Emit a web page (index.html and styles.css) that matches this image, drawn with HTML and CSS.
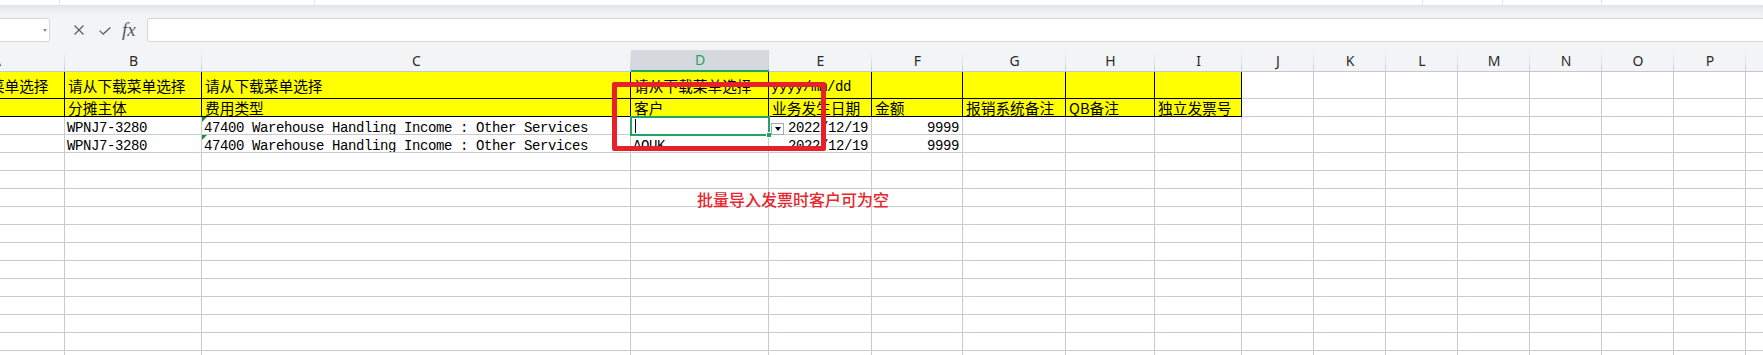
FILE: index.html
```html
<!DOCTYPE html>
<html lang="zh-CN">
<head>
<meta charset="utf-8">
<title>Sheet</title>
<link rel="stylesheet" href="styles.css">
</head>
<body>
<div class="app">
  <div class="toolbar">
    <span class="tb" style="width:60px"></span>
    <span class="tb" style="width:255px"></span>
    <span class="tb" style="width:1108px"></span>
    <span class="tb" style="width:80px"></span>
    <span class="tb" style="width:99px"></span>
  </div>
  <div class="shadow"></div>
  <div class="fbar">
    <div class="namebox"><span class="nb-arrow"></span></div>
    <svg class="ic ic-x" width="10" height="10" viewBox="0 0 10 10"><path d="M0.5 0.5L9.5 9.5M9.5 0.5L0.5 9.5" stroke="#5b5f66" stroke-width="1.3" fill="none"/></svg>
    <svg class="ic ic-ok" width="12" height="8" viewBox="0 0 12 8"><path d="M0.6 3.6L4.2 7.1L11.4 0.6" stroke="#5b5f66" stroke-width="1.3" fill="none"/></svg>
    <span class="fx">fx</span>
    <div class="finput"></div>
  </div>
  <div class="gap"></div>
  <div class="sheet">
    <div class="r h">
      <span>A</span><span>B</span><span>C</span><span class="sel">D</span><span>E</span><span>F</span><span>G</span><span>H</span><span>I</span><span>J</span><span>K</span><span>L</span><span>M</span><span>N</span><span>O</span><span>P</span><span>Q</span>
    </div>
    <div class="r r1">
      <span class="y">请从下载菜单选择</span><span class="y">请从下载菜单选择</span><span class="y">请从下载菜单选择</span><span class="y">请从下载菜单选择</span><span class="y m">yyyy/mm/dd</span><span class="y"></span><span class="y"></span><span class="y"></span><span class="y"></span><span></span><span></span><span></span><span></span><span></span><span></span><span></span><span></span>
    </div>
    <div class="r r2">
      <span class="y"></span><span class="y">分摊主体</span><span class="y">费用类型</span><span class="y">客户</span><span class="y">业务发生日期</span><span class="y">金额</span><span class="y">报销系统备注</span><span class="y">QB备注</span><span class="y">独立发票号</span><span></span><span></span><span></span><span></span><span></span><span></span><span></span><span></span>
    </div>
    <div class="r d">
      <span></span><span class="m">WPNJ7-3280</span><span class="m tri">47400 Warehouse Handling Income : Other Services</span><span></span><span class="m n">2022/12/19</span><span class="m n">9999</span><span></span><span></span><span></span><span></span><span></span><span></span><span></span><span></span><span></span><span></span><span></span>
    </div>
    <div class="r d">
      <span></span><span class="m">WPNJ7-3280</span><span class="m tri">47400 Warehouse Handling Income : Other Services</span><span class="m">AOUK</span><span class="m n">2022/12/19</span><span class="m n">9999</span><span></span><span></span><span></span><span></span><span></span><span></span><span></span><span></span><span></span><span></span><span></span>
    </div>
    <div class="r"><span></span><span></span><span></span><span></span><span></span><span></span><span></span><span></span><span></span><span></span><span></span><span></span><span></span><span></span><span></span><span></span><span></span></div>
    <div class="r"><span></span><span></span><span></span><span></span><span></span><span></span><span></span><span></span><span></span><span></span><span></span><span></span><span></span><span></span><span></span><span></span><span></span></div>
    <div class="r"><span></span><span></span><span></span><span></span><span></span><span></span><span></span><span></span><span></span><span></span><span></span><span></span><span></span><span></span><span></span><span></span><span></span></div>
    <div class="r"><span></span><span></span><span></span><span></span><span></span><span></span><span></span><span></span><span></span><span></span><span></span><span></span><span></span><span></span><span></span><span></span><span></span></div>
    <div class="r"><span></span><span></span><span></span><span></span><span></span><span></span><span></span><span></span><span></span><span></span><span></span><span></span><span></span><span></span><span></span><span></span><span></span></div>
    <div class="r"><span></span><span></span><span></span><span></span><span></span><span></span><span></span><span></span><span></span><span></span><span></span><span></span><span></span><span></span><span></span><span></span><span></span></div>
    <div class="r"><span></span><span></span><span></span><span></span><span></span><span></span><span></span><span></span><span></span><span></span><span></span><span></span><span></span><span></span><span></span><span></span><span></span></div>
    <div class="r"><span></span><span></span><span></span><span></span><span></span><span></span><span></span><span></span><span></span><span></span><span></span><span></span><span></span><span></span><span></span><span></span><span></span></div>
    <div class="r"><span></span><span></span><span></span><span></span><span></span><span></span><span></span><span></span><span></span><span></span><span></span><span></span><span></span><span></span><span></span><span></span><span></span></div>
    <div class="r"><span></span><span></span><span></span><span></span><span></span><span></span><span></span><span></span><span></span><span></span><span></span><span></span><span></span><span></span><span></span><span></span><span></span></div>
    <div class="r"><span></span><span></span><span></span><span></span><span></span><span></span><span></span><span></span><span></span><span></span><span></span><span></span><span></span><span></span><span></span><span></span><span></span></div>
    <div class="r"><span></span><span></span><span></span><span></span><span></span><span></span><span></span><span></span><span></span><span></span><span></span><span></span><span></span><span></span><span></span><span></span><span></span></div>
  </div>

  <div class="selbox"><span class="caret"></span><span class="handle"></span></div>
  <div class="ddbtn"><span class="ddtri"></span></div>
  <div class="redbox"></div>
  <div class="note">批量导入发票时客户可为空</div>
</div>
</body>
</html>
```

FILE: styles.css
```css
html, body {
  margin: 0;
  padding: 0;
  background: #ffffff;
}

.app {
  position: relative;
  width: 1763px;
  height: 355px;
  overflow: hidden;
  background: #f3f4f6;
  font-family: "Noto Sans", "Noto Sans CJK SC", sans-serif;
}

/* top ribbon edge */
.toolbar {
  height: 5px;
  background: #ffffff;
  display: flex;
}
.tb {
  height: 5px;
  border-right: 1px solid #e3e4e7;
  box-sizing: border-box;
  flex: none;
}
.shadow {
  height: 13px;
  background: linear-gradient(to bottom, #e2e3e6 0, #eceef0 40%, #f3f4f6 100%);
}

/* formula bar */
.fbar {
  height: 24px;
  display: flex;
  align-items: center;
}
.namebox {
  flex: none;
  margin-left: -6px;
  width: 56px;
  height: 24px;
  box-sizing: border-box;
  background: #ffffff;
  border: 1px solid #d3d6dd;
  border-radius: 3px;
  display: flex;
  align-items: center;
  justify-content: flex-end;
}
.nb-arrow {
  width: 0;
  height: 0;
  margin-right: 2px;
  border-left: 2.5px solid transparent;
  border-right: 2.5px solid transparent;
  border-top: 3px solid #8a8d93;
}
.ic {
  flex: none;
  display: block;
}
.ic-x {
  margin-left: 24px;
}
.ic-ok {
  margin-left: 15px;
  margin-top: 1px;
}
.fx {
  flex: none;
  margin-left: 11px;
  font-family: "Liberation Serif", serif;
  font-style: italic;
  font-size: 19px;
  line-height: 20px;
  color: #55585e;
  width: 15px;
}
.finput {
  flex: 1;
  margin-left: 10px;
  margin-right: -4px;
  height: 24px;
  box-sizing: border-box;
  background: #ffffff;
  border: 1px solid #d3d6dd;
  border-radius: 3px;
}

.gap {
  height: 8px;
}

/* sheet grid */
.sheet {
  margin-left: -72px;
  width: 1890px;
  background: #ffffff;
}
.r {
  display: grid;
  grid-template-columns: 137px 137px 429px 138px 103px 91px 103px 89px 87px repeat(8, 72px);
  height: 18px;
}
.r > span {
  display: block;
  box-sizing: border-box;
  border-right: 1px solid #c6cbd6;
  border-bottom: 1px solid #c6cbd6;
  overflow: hidden;
  white-space: nowrap;
  padding: 0 2px 0 3px;
  font-family: "Noto Sans CJK SC", "Noto Sans", sans-serif;
  font-size: 14.7px;
  line-height: 17px;
  color: #000000;
}

/* column header row */
.r.h {
  height: 22px;
  background: #f3f4f6;
}
.r.h > span {
  font-family: "Noto Sans", "Liberation Sans", sans-serif;
  font-size: 14px;
  line-height: 21px;
  text-align: center;
  color: #2a2a2a;
  padding: 0;
  border-right: none;
  border-bottom: 1px solid #c3c8d2;
  background-image: linear-gradient(to bottom, rgba(200, 204, 214, 0) 0, rgba(200, 204, 214, 0) 10%, #c9cdd7 100%);
  background-size: 1px 100%;
  background-position: right top;
  background-repeat: no-repeat;
}
.r.h > span.sel {
  background-color: #d5d8de;
  color: #1fa463;
  line-height: 20px;
  border-bottom: 2px solid #1fa463;
}

.r.r1 {
  height: 27px;
}
.r.r1 > span {
  padding-top: 5px;
}
.r.r1 > span.m {
  padding-top: 7px;
}

.r > span.y {
  background: #ffff00;
  border-right-color: #000000;
  border-bottom-color: #000000;
}

.r > span.m {
  font-family: "Liberation Mono", monospace;
  font-size: 14px;
  letter-spacing: -0.4px;
  line-height: 17px;
  padding-left: 2px;
}
.r.d > span.m {
  padding-top: 3px;
}
.r > span.n {
  text-align: right;
  padding-right: 3px;
}

.r > span.tri {
  position: relative;
}
.r > span.tri::before {
  content: "";
  position: absolute;
  left: 0;
  top: 0;
  width: 0;
  height: 0;
  border-top: 5px solid #1f8a3c;
  border-right: 5px solid transparent;
}

/* overlays */
.selbox {
  position: absolute;
  left: 630px;
  top: 116px;
  width: 140px;
  height: 20px;
  box-sizing: border-box;
  border: 2px solid #1fa463;
}
.caret {
  position: absolute;
  left: 3px;
  top: 1px;
  width: 1px;
  height: 14px;
  background: #000000;
}
.handle {
  position: absolute;
  right: -4px;
  bottom: -4px;
  width: 4px;
  height: 4px;
  background: #1fa463;
  border: 1px solid #ffffff;
}
.ddbtn {
  position: absolute;
  left: 771px;
  top: 123px;
  width: 13px;
  height: 12px;
  box-sizing: border-box;
  background: #ffffff;
  border: 1px solid #a3acbd;
  display: flex;
  align-items: center;
  justify-content: center;
}
.ddtri {
  width: 0;
  height: 0;
  border-left: 3.5px solid transparent;
  border-right: 3.5px solid transparent;
  border-top: 4px solid #000000;
}
.redbox {
  position: absolute;
  left: 612px;
  top: 82px;
  width: 214px;
  height: 69px;
  box-sizing: border-box;
  border: 5px solid #e8202a;
  border-radius: 2px;
}
.note {
  position: absolute;
  left: 697px;
  top: 191px;
  font-family: "Noto Sans CJK SC", sans-serif;
  font-size: 16px;
  line-height: 17px;
  font-weight: 500;
  color: #e8262d;
  white-space: nowrap;
}
```
